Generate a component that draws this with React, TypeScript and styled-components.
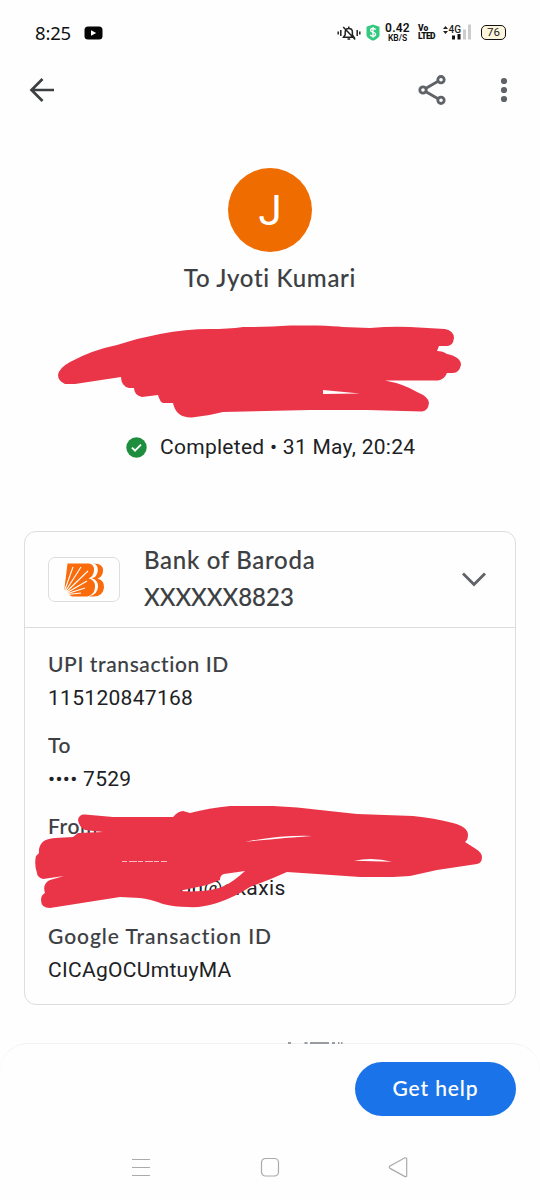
import React from 'react';
import styled, { createGlobalStyle } from 'styled-components';

const Global = createGlobalStyle`
  * { box-sizing: border-box; }
  body { margin: 0; background: #fefefe; font-family: Roboto, "Liberation Sans", sans-serif; }
  svg { display: block; flex: none; }
`;

const Screen = styled.div`
  position: relative;
  width: 540px;
  height: 1200px;
  overflow: hidden;
  display: flex;
  flex-direction: column;
  background: #fefefe;
`;

const Text = styled.div<{ $size: number; $space?: number; $color?: string; $line: number }>`
  font-family: Roboto, sans-serif;
  font-size: ${p => p.$size}px;
  letter-spacing: ${p => p.$space ?? 0.3}px;
  line-height: ${p => p.$line}px;
  color: ${p => p.$color ?? '#202124'};
  white-space: nowrap;
`;

const Title = styled(Text)`
  font-family: Lato, Roboto, sans-serif;
  font-weight: 500;
  font-variant-ligatures: none;
  color: ${p => p.$color ?? '#3c4043'};
  -webkit-text-stroke: 0.1px currentColor;
`;

const StatusBar = styled.header`
  height: 60px;
  padding: 5px 34px 0 35px;
  display: flex;
  align-items: center;
`;

const Clock = styled.time`
  font: 400 18.5px/24px "Noto Sans", sans-serif;
  letter-spacing: -0.2px;
  color: #111;
  width: 49px;
`;

const StatusIcons = styled.div`
  margin-left: auto;
  display: flex;
  align-items: center;
`;

const BadgeIcon = styled.svg`margin-left: 5px;`;
const SignalIcon = styled.svg`margin-left: 6px;`;

const Stack = styled.div<{ $width: number; $left: number; $align: string }>`
  width: ${p => p.$width}px;
  margin-left: ${p => p.$left}px;
  font-family: Roboto, sans-serif;
  color: #111;
  text-align: ${p => p.$align};
  white-space: nowrap;
`;

const Tiny = styled.div<{ $size: number; $line: number; $space?: number; $weight?: number }>`
  font-size: ${p => p.$size}px;
  line-height: ${p => p.$line}px;
  letter-spacing: ${p => p.$space ?? 0}px;
  font-weight: ${p => p.$weight ?? 700};
`;

const Battery = styled.div`
  width: 25px;
  height: 15px;
  margin-left: 9px;
  border: 1.5px solid #111;
  border-radius: 5px;
  background: #fdf6dc;
  font: 400 11.5px/13px Roboto, sans-serif;
  color: #222;
  text-align: center;
`;

const AppBar = styled.nav`
  height: 60px;
  padding: 0 30px 0 28px;
  display: flex;
  align-items: center;
  gap: 50px;
`;

const Spacer = styled.div`flex: 1;`;

const Payee = styled.section`
  height: 411px;
  padding-top: 48px;
  display: flex;
  flex-direction: column;
  align-items: center;
`;

const Avatar = styled.div`
  width: 84px;
  height: 84px;
  padding-top: 2px;
  border-radius: 50%;
  background: #ef6c00;
  display: flex;
  align-items: center;
  justify-content: center;
`;

const PayeeName = styled.div`
  margin-top: 10px;
  height: 32px;
`;

const Status = styled.div`
  margin-top: 139px;
  width: 288px;
  display: flex;
  align-items: center;
  gap: 13px;
`;

const Card = styled.section`
  width: 492px;
  height: 474px;
  margin-left: 24px;
  border: 1.5px solid #dcdde0;
  border-radius: 12px;
  flex: none;
`;

const CardHead = styled.div`
  height: 96px;
  padding: 0 28px 0 23px;
  display: flex;
  align-items: center;
  border-bottom: 1.5px solid #dcdde0;
`;

const LogoBox = styled.div`
  width: 72px;
  height: 45px;
  margin-right: 24px;
  border: 1.5px solid #dcdde0;
  border-radius: 7px;
  display: flex;
  align-items: center;
  justify-content: center;
`;

const Account = styled.div`padding-bottom: 3px;`;

const Details = styled.div`
  padding: 19px 23px;
`;

const Detail = styled.div<{ $height: number }>`
  height: ${p => p.$height}px;
`;

const EmailLine = styled.div`
  padding: 28px 0 0 131px;
`;

const Footer = styled.footer`
  position: absolute;
  left: 0;
  right: 0;
  bottom: 0;
  height: 157px;
  border-top: 1px solid #f1f1f2;
  border-radius: 28px 28px 0 0;
  background: #fefefe;
  display: flex;
  flex-direction: column;
`;

const Actions = styled.div`
  display: flex;
  justify-content: flex-end;
  padding: 18px 24px 0 0;
`;

const HelpButton = styled.button`
  width: 161px;
  height: 54px;
  padding: 0 0 3px;
  border: 0;
  border-radius: 27px;
  background: #1a73e8;
`;

const NavKeys = styled.div`
  display: flex;
  justify-content: space-between;
  width: 277px;
  margin: 40px 0 0 131px;
`;

const Overlay = styled.svg`
  position: absolute;
  left: 0;
  top: 0;
  pointer-events: none;
`;

export default function App() {
  return (
    <Screen>
      <Global />
      <StatusBar>
        <Clock>8:25</Clock>
        <svg width="19" height="14" viewBox="0 0 19 14">
          <rect x=".5" y=".5" width="18" height="13" rx="3.5" fill="#050505" />
          <path d="M7 4.2v5.6L12.2 7z" fill="#fff" />
        </svg>
        <StatusIcons>
          <svg width="24" height="16" viewBox="0 0 24 16" fill="none" stroke="#222" strokeWidth="1.5">
            <path d="M1.2 6.500v3M3.8 5v6M20.2 5v6M22.8 6.500v3M6.500 12.200h10.500l-1.600-2.400V7c0-2-1.400-3.600-3.600-3.600S8.200 5 8.200 7v2.800zM11.800 1.500v2M10.500 14h2.700M6.200 2l12 12.500" />
          </svg>
          <BadgeIcon width="14" height="17" viewBox="0 0 14 17">
            <path d="M7 .5l6.500 2.200v8.300c0 2.500-3.500 4.500-6.500 5.700C4 15.500.5 13.500.5 11V2.700z" fill="#34c881" />
            <path d="M9.600 5.600C9 4.700 8 4.500 7 4.500c-1.500 0-2.500.7-2.500 1.800 0 2.700 5.100 1.300 5.100 4 0 1.200-1.100 1.900-2.600 1.900-1.200 0-2.200-.4-2.800-1.400M7 3v10.700" fill="none" stroke="#fff" strokeWidth="1.300" />
          </BadgeIcon>
          <Stack $width={25} $left={5} $align="center">
            <Tiny $size={12} $line={11} $space={0.2} $weight={600}>0.42</Tiny>
            <Tiny $size={8.500} $line={9} $weight={600}>KB/S</Tiny>
          </Stack>
          <Stack $width={19} $left={8} $align="left">
            <Tiny $size={8.500} $line={8} $weight={900}>Vo</Tiny>
            <Tiny $size={8.500} $line={9} $space={-0.600} $weight={900}>LTED</Tiny>
          </Stack>
          <SignalIcon width="29" height="17" viewBox="0 0 29 17">
            <path d="M0 5l2.500-3L5 5zM0 7l2.500 3L5 7z" fill="#222" />
            <text x="5.500" y="8.500" fontFamily="Roboto" fontSize="10" fontWeight="500" fill="#222">4G</text>
            <path d="M9 11.500h3v4H9zM14.500 10h3v5.500h-3z" fill="#111" />
            <path d="M20 5.500h3v10h-3zM25 .5h3v15h-3z" fill="#ccc" />
          </SignalIcon>
          <Battery>76</Battery>
        </StatusIcons>
      </StatusBar>

      <AppBar>
        <svg width="28" height="28" viewBox="0 0 28 28" fill="none" stroke="#3c4043" strokeWidth="2.700">
          <path d="M26 14H4M14.500 3L3.500 14l11 11" />
        </svg>
        <Spacer />
        <svg width="30" height="32" viewBox="0 0 30 32" fill="none" stroke="#5f6368" strokeWidth="2.800">
          <path d="M8 14.300L20.500 7M8 17.700L20.500 25" />
          <circle cx="5" cy="16" r="3.200" /><circle cx="23" cy="5.700" r="3.200" /><circle cx="23" cy="26.300" r="3.200" />
        </svg>
        <svg width="12" height="28" viewBox="0 0 12 28" fill="#5f6368">
          <circle cx="6" cy="5" r="3.100" /><circle cx="6" cy="14" r="3.100" /><circle cx="6" cy="23" r="3.100" />
        </svg>
      </AppBar>

      <Payee>
        <Avatar><Text $size={42} $line={82} $space={0} $color="#fff">J</Text></Avatar>
        <PayeeName><Title $size={24} $line={32} $space={0.700}>To Jyoti Kumari</Title></PayeeName>
        <Status>
          <svg width="21" height="21" viewBox="0 0 21 21">
            <circle cx="10.500" cy="10.500" r="10.200" fill="#1e8e3e" />
            <path d="M6 10.700l3 3 6-6" fill="none" stroke="#fff" strokeWidth="1.900" />
          </svg>
          <Text $size={21} $line={28} $space={0.280}>Completed • 31 May, 20:24</Text>
        </Status>
      </Payee>

      <Card>
        <CardHead>
          <LogoBox>
            <svg width="44" height="36" viewBox="0 0 44 36">
              <path d="M5.500 1.500H27q5.500 1 5 7-.5 6-5.500 8 7 1.500 6.500 8.500-.5 8-7.500 9.500H10L2 30z" fill="#f96b0b" />
              <path d="M32 1.500q9.500 0 9 7.500-.5 6-5.500 7.500 7 2 6.500 9-.8 9-10.500 9H27q8.500-2 9-9.500.4-7-6-8.500 5.500-2 5.800-8 .2-5.500-3.800-7z" fill="#f96b0b" />
              <path d="M1 33L11 5M1 33L19 5M1 33L26 9M1 33l24-14M1 33l22-7M1 33l18-2" stroke="#fff" strokeWidth="1.100" />
            </svg>
          </LogoBox>
          <Account>
            <Title $size={24} $line={37} $space={0.700}>Bank of Baroda</Title>
            <Title $size={24} $line={37} $space={0}>XXXXXX8823</Title>
          </Account>
          <Spacer />
          <svg width="26" height="16" viewBox="0 0 26 16" fill="none" stroke="#5f6368" strokeWidth="2.800"><path d="M2 1.500l11 11 11-11" /></svg>
        </CardHead>
        <Details>
          <Detail $height={81}>
            <Title $size={21} $line={33} $space={0.600}>UPI transaction ID</Title>
            <Text $size={21} $line={36}>115120847168</Text>
          </Detail>
          <Detail $height={81}>
            <Title $size={21} $line={33} $space={0.600}>To</Title>
            <Text $size={21} $line={36}>•••• 7529</Text>
          </Detail>
          <Detail $height={110}>
            <Title $size={21} $line={33} $space={0.600}>From</Title>
            <EmailLine><Text $size={21} $line={36} $space={0.450}>ou@okaxis</Text></EmailLine>
          </Detail>
          <Detail $height={81}>
            <Title $size={21} $line={33} $space={0.950}>Google Transaction ID</Title>
            <Text $size={21} $line={36}>CICAgOCUmtuyMA</Text>
          </Detail>
        </Details>
      </Card>

      <Overlay width="540" height="1200" viewBox="0 0 540 1200" fill="#ea3549" fillRule="evenodd">
        <path d="M58 375Q59 368 70 362Q92 350 117 345Q138 338 160 334Q186 329 210 329Q228 329 243 327Q268 327 290 325.500H317Q335 326 343 327L370 328Q392 326 410 327L445 329Q454 331 454 338Q453 346 447 346H439L437 351Q443 351 447 354Q461 357 461 365Q459 373 453 373H447Q444 380 438 380.500H385Q404 384 417 392Q429 397 429 403Q428 411 422 411.500L367 410H310L223 412Q208 416 192 417.500Q176 418 173 403H163Q160 402 158 395L142 397Q134 395 134 388H129Q121 386 121 377L75 384H65Q58 381 58 375ZM323 390L360 393.500L323 394Z" />
        <path d="M78 820Q79 814 85 814.500L113 817H173Q178 811 183 811L190 813Q209 808 230 806H273Q298 807 320 810L357 814L413 816Q434 818 453 823Q468 827 468 835Q468 840 465 842L476 849Q482 853 482 857Q482 863 477 864L437 870L410 876L393 877H360L317 874L287 872Q267 881 250 887Q235 897 217 903Q202 908 188 907Q174 907 163 904Q150 899 140 898L120 897L50 908Q41 908 41 900Q41 895 45 893Q42 884 50 880L64 876L43 879Q37 877 37 873Q34 864 36 856L39 853Q38 839 55 838L73 837L78 833L103 832L85 830Q79 827 78 820ZM179 891L207 885L220 880Q220 875 224 874L245 871Q233 882 224 886Q210 893 179 891ZM245 841.700Q282 835 312 836Q284 838 245 841.700ZM354 860.700Q373 857 392 861.700Z" />
        <path d="M122 861.500h45" stroke="#f9bec4" strokeWidth="1" strokeDasharray="5 2 8 1" />
      </Overlay>

      <Footer>
        <Actions>
          <HelpButton><Title as="span" $size={21} $line={30} $space={0.900} $color="#fff">Get help</Title></HelpButton>
        </Actions>
        <NavKeys>
          <svg width="20" height="22" viewBox="0 0 20 22" fill="none" stroke="#aaa" strokeWidth="1.200"><path d="M1 3.500h18M1 11.500h18M1 19.500h18" /></svg>
          <svg width="20" height="22" viewBox="0 0 20 22" fill="none" stroke="#aaa" strokeWidth="1.200"><rect x="1.500" y="2.500" width="17" height="17.500" rx="4" /></svg>
          <svg width="20" height="22" viewBox="0 0 20 22" fill="none" stroke="#aaa" strokeWidth="1.200"><path d="M17 1.800L2 10Q.5 11.200 2 12.400L17 20.600Q18.700 21 18.700 19.500V3Q18.700 1.500 17 1.800z" /></svg>
        </NavKeys>
      </Footer>

      <Overlay width="540" height="1200" viewBox="0 0 540 1200" stroke="#999ca0" strokeWidth="2">
        <path d="M288 1043h3M304.500 1043h3M310 1043h19M332 1043h3M338 1043h1.500M341 1043h1.500" />
      </Overlay>
    </Screen>
  );
}
